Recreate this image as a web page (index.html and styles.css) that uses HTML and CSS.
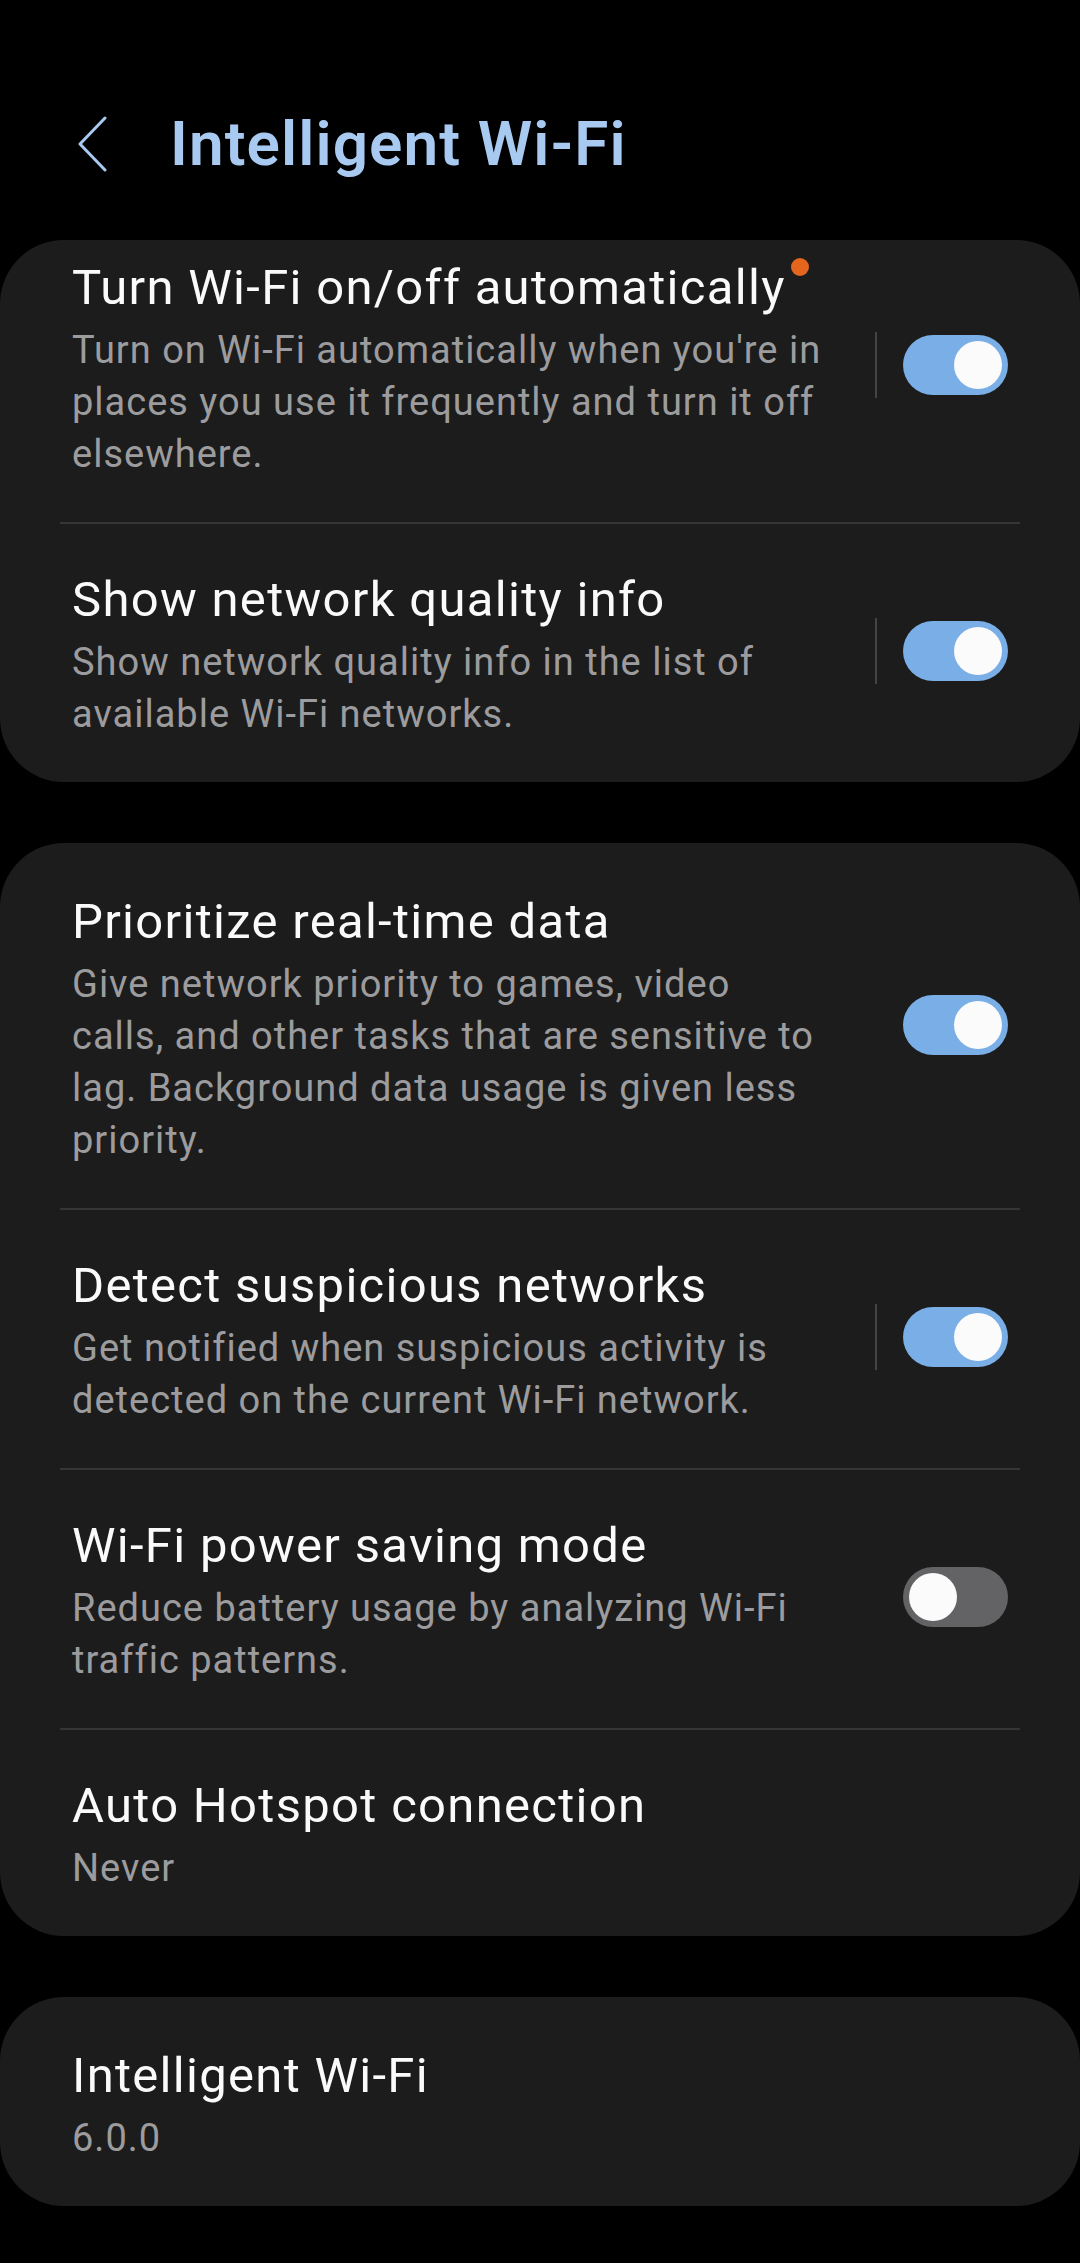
FILE: index.html
```html
<!DOCTYPE html>
<html lang="en">
<head>
<meta charset="utf-8">
<title>Intelligent Wi-Fi</title>
<link rel="stylesheet" href="styles.css">
</head>
<body>
<div class="screen">
  <header class="header">
    <svg class="back" width="30" height="56" viewBox="0 0 30 56" aria-hidden="true">
      <polyline points="27,2 2,28 27,54" fill="none" stroke="#a8c9f0" stroke-width="3" stroke-linecap="round" stroke-linejoin="round"/>
    </svg>
    <h1 class="page-title">Intelligent Wi-Fi</h1>
  </header>

  <section class="card">
    <div class="row row-first">
      <div class="text">
        <div class="title">Turn Wi-Fi on/off automatically<span class="badge"></span></div>
        <div class="desc">Turn on Wi-Fi automatically when you're in places you use it frequently and turn it off elsewhere.</div>
      </div>
      <div class="control">
        <span class="vbar"></span>
        <span class="switch on"><span class="knob"></span></span>
      </div>
    </div>
    <div class="sep"></div>
    <div class="row">
      <div class="text">
        <div class="title">Show network quality info</div>
        <div class="desc">Show network quality info in the list of available Wi-Fi networks.</div>
      </div>
      <div class="control">
        <span class="vbar"></span>
        <span class="switch on"><span class="knob"></span></span>
      </div>
    </div>
  </section>

  <section class="card">
    <div class="row">
      <div class="text">
        <div class="title">Prioritize real-time data</div>
        <div class="desc">Give network priority to games, video calls, and other tasks that are sensitive to lag. Background data usage is given less priority.</div>
      </div>
      <div class="control">
        <span class="vbar hidden"></span>
        <span class="switch on"><span class="knob"></span></span>
      </div>
    </div>
    <div class="sep"></div>
    <div class="row">
      <div class="text">
        <div class="title">Detect suspicious networks</div>
        <div class="desc">Get notified when suspicious activity is detected on the current Wi-Fi network.</div>
      </div>
      <div class="control">
        <span class="vbar"></span>
        <span class="switch on"><span class="knob"></span></span>
      </div>
    </div>
    <div class="sep"></div>
    <div class="row">
      <div class="text">
        <div class="title">Wi-Fi power saving mode</div>
        <div class="desc">Reduce battery usage by analyzing Wi-Fi traffic patterns.</div>
      </div>
      <div class="control">
        <span class="vbar hidden"></span>
        <span class="switch off"><span class="knob"></span></span>
      </div>
    </div>
    <div class="sep"></div>
    <div class="row">
      <div class="text">
        <div class="title">Auto Hotspot connection</div>
        <div class="desc">Never</div>
      </div>
    </div>
  </section>

  <section class="card">
    <div class="row">
      <div class="text">
        <div class="title">Intelligent Wi-Fi</div>
        <div class="desc">6.0.0</div>
      </div>
    </div>
  </section>
</div>
</body>
</html>
```

FILE: styles.css
```css
html, body {
  margin: 0;
  padding: 0;
  background: #000;
}

body {
  font-family: Roboto, "Noto Sans", "Liberation Sans", sans-serif;
  color: #fafafa;
  width: 1080px;
  min-height: 2263px;
}

.header {
  box-sizing: border-box;
  height: 240px;
  padding: 113px 0 0 78px;
  display: flex;
  align-items: flex-start;
}

.back {
  display: block;
  margin-top: 3px;
  flex: none;
}

.page-title {
  margin: 0 0 0 62px;
  font-size: 62px;
  line-height: 62px;
  font-weight: 600;
  color: #a8c9f0;
  letter-spacing: 1.1px;
}

.card {
  background: #1c1c1c;
  border-radius: 64px;
  padding-top: 3px;
  margin-bottom: 61px;
}

.row {
  display: flex;
  align-items: center;
  padding: 46px 72px 42px 72px;
}

.row.row-first {
  padding-top: 15px;
}

.text {
  flex: 1;
  min-width: 0;
  padding-right: 48px;
}

.title {
  font-size: 49px;
  line-height: 60px;
  letter-spacing: 1.3px;
  color: #fafafa;
  white-space: nowrap;
}

.badge {
  display: inline-block;
  vertical-align: top;
  width: 18px;
  height: 18px;
  margin-left: 5px;
  border-radius: 50%;
  background: #e3651e;
}

.desc {
  margin-top: 6px;
  font-size: 38px;
  line-height: 52px;
  letter-spacing: 1px;
  color: #9c9c9f;
}

.control {
  flex: none;
  display: flex;
  align-items: center;
  gap: 26px;
  margin-bottom: 9px;
}

.vbar {
  width: 2px;
  height: 66px;
  background: #444446;
}

.vbar.hidden {
  background: transparent;
}

.switch {
  box-sizing: border-box;
  width: 105px;
  height: 60px;
  border-radius: 30px;
  padding: 6px;
  display: flex;
}

.switch.on {
  background: #7aaee6;
  justify-content: flex-end;
}

.switch.off {
  background: #636366;
  justify-content: flex-start;
}

.knob {
  width: 48px;
  height: 48px;
  border-radius: 50%;
  background: #fbfbfb;
}

.sep {
  height: 2px;
  margin: 0 60px;
  background: #353535;
}
```
